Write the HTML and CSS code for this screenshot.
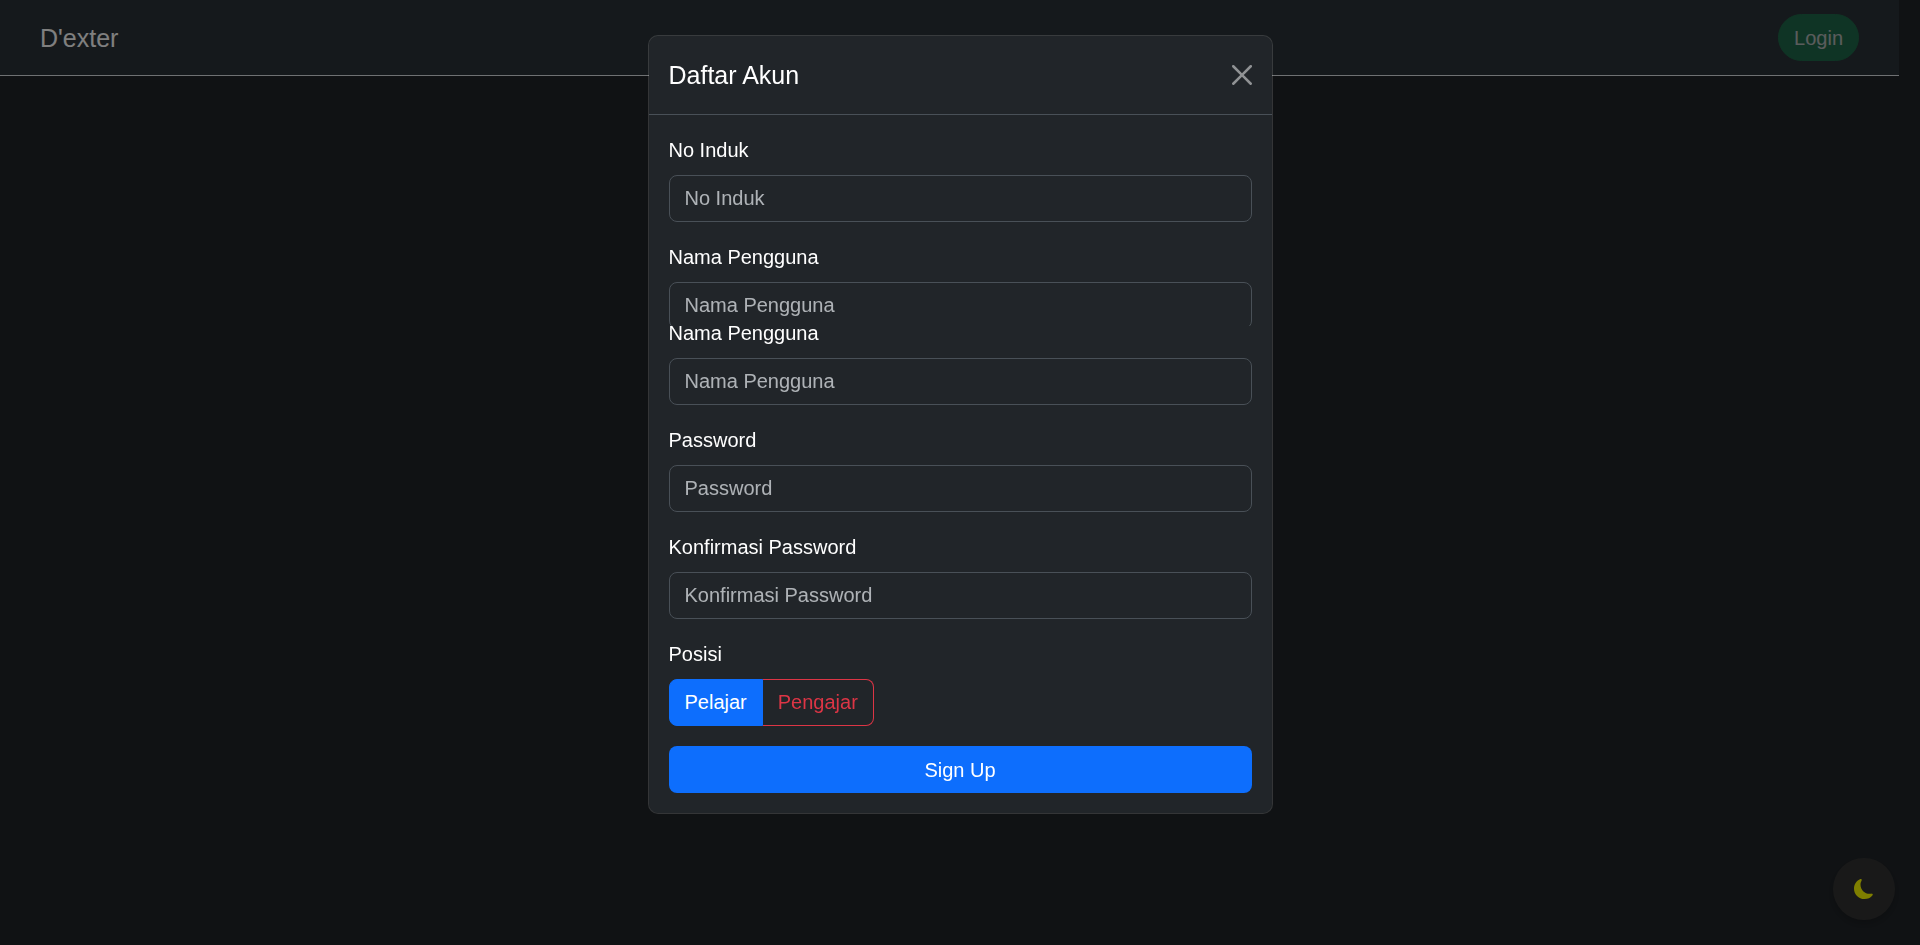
FILE: index.html
```
<!DOCTYPE html>
<html lang="id">
<head>
<meta charset="utf-8">
<meta name="viewport" content="width=device-width, initial-scale=1">
<title>D'exter</title>
<link rel="stylesheet" href="styles.css">
</head>
<body>
<div class="page">
  <nav class="navbar">
    <a class="brand" href="#">D'exter</a>
    <button class="login" type="button" disabled>Login</button>
  </nav>
</div>
<button class="theme-toggle" type="button" aria-label="Mode gelap">
  <svg class="moon" viewBox="0 0 16 16" aria-hidden="true"><path fill="currentColor" d="M6 .278a.768.768 0 0 1 .08.858 7.208 7.208 0 0 0-.878 3.46c0 4.021 3.278 7.277 7.318 7.277.527 0 1.04-.055 1.533-.16a.787.787 0 0 1 .81.316.733.733 0 0 1-.031.893A8.349 8.349 0 0 1 8.344 16C3.734 16 0 12.286 0 7.71 0 4.266 2.114 1.312 5.124.06A.752.752 0 0 1 6 .278z"/></svg>
</button>
<div class="backdrop">
  <div class="modal" role="dialog" aria-modal="true" aria-labelledby="modal-title">
    <header class="modal-header">
      <h1 class="modal-title" id="modal-title">Daftar Akun</h1>
      <button class="close" type="button" aria-label="Tutup">
        <svg class="close-icon" viewBox="0 0 16 16" aria-hidden="true"><path fill="currentColor" d="M.293.293a1 1 0 0 1 1.414 0L8 6.586 14.293.293a1 1 0 1 1 1.414 1.414L9.414 8l6.293 6.293a1 1 0 0 1-1.414 1.414L8 9.414l-6.293 6.293a1 1 0 0 1-1.414-1.414L6.586 8 .293 1.707a1 1 0 0 1 0-1.414z"/></svg>
      </button>
    </header>
    <form class="modal-body">
      <div class="field">
        <label class="label" for="induk">No Induk</label>
        <input class="control" id="induk" type="text" placeholder="No Induk">
      </div>
      <div class="field field-cut-end">
        <label class="label" for="nama-1">Nama Pengguna</label>
        <input class="control" id="nama-1" type="text" placeholder="Nama Pengguna">
      </div>
      <div class="field field-cut-start">
        <label class="label" for="nama-2">Nama Pengguna</label>
        <input class="control" id="nama-2" type="text" placeholder="Nama Pengguna">
      </div>
      <div class="field">
        <label class="label" for="password">Password</label>
        <input class="control" id="password" type="password" placeholder="Password">
      </div>
      <div class="field">
        <label class="label" for="konfirmasi">Konfirmasi Password</label>
        <input class="control" id="konfirmasi" type="password" placeholder="Konfirmasi Password">
      </div>
      <fieldset class="field choices">
        <legend class="label">Posisi</legend>
        <div class="group">
          <input class="check" type="radio" name="posisi" id="pelajar" checked>
          <label class="option option-primary" for="pelajar">Pelajar</label>
          <input class="check" type="radio" name="posisi" id="pengajar">
          <label class="option option-danger" for="pengajar">Pengajar</label>
        </div>
      </fieldset>
      <button class="submit" type="submit">Sign Up</button>
    </form>
  </div>
</div>
</body>
</html>
```

FILE: styles.css
```
*, *::before, *::after { box-sizing: border-box; }

body {
  margin: 0;
  background: #212529;
  color: #fff;
  font: 20px/30px "Liberation Sans", Arial, sans-serif;
}

button, input { font: inherit; }

/* room for the scrollbar while the dialog is open */
.page { padding-right: 21px; }

.navbar {
  display: flex;
  align-items: center;
  justify-content: space-between;
  padding: 14px 40px;
  background: #2b3338;
  border-bottom: 1px solid #dee2e6;
}

.brand {
  color: #fff;
  font-size: 25px;
  text-decoration: none;
}

.login {
  height: 47px;
  padding: 0 15px;
  border: 1px solid #198754;
  border-radius: 24px;
  background: #198754;
  color: #fff;
  opacity: .65;
}

.theme-toggle {
  position: fixed;
  right: 25px;
  bottom: 25px;
  display: flex;
  align-items: center;
  justify-content: center;
  width: 62px;
  height: 62px;
  padding: 0;
  border: 0;
  border-radius: 50%;
  background: #333;
  color: #ff0;
  box-shadow: 0 4px 8px rgba(0, 0, 0, .2);
}

.moon { width: 20px; height: 20px; }

.backdrop {
  position: fixed;
  inset: 0;
  overflow: auto;
  padding: 35px 20px;
  background: rgba(0, 0, 0, .5);
}

.modal {
  max-width: 625px;
  margin: 0 auto;
  border: 1px solid rgba(255, 255, 255, .15);
  border-radius: 10px;
  background: #212529;
  background-clip: padding-box;
}

.modal-header {
  display: flex;
  align-items: center;
  justify-content: space-between;
  padding: 20px;
  border-bottom: 1px solid #495057;
}

.modal-title {
  margin: 0;
  font-size: 25px;
  font-weight: 400;
  line-height: 38px;
}

.close {
  display: flex;
  padding: 0;
  border: 0;
  background: none;
  color: #fff;
  opacity: .5;
}

.close-icon { width: 20px; height: 20px; }

.modal-body { padding: 20px; }

.field { margin-bottom: 20px; }

.label {
  display: block;
  margin-bottom: 10px;
  padding: 0;
}

.control {
  display: block;
  width: 100%;
  height: 47px;
  padding: 0 15px;
  border: 1px solid #495057;
  border-radius: 8px;
  background: #212529;
  color: #fff;
}

.control::placeholder { color: rgba(222, 226, 230, .75); opacity: 1; }

/* the two name fields meet in a seam that hides the edge of each */
.field-cut-end {
  height: 84px;
  margin-bottom: 0;
  overflow: hidden;
}

.field-cut-start { overflow: hidden; }
.field-cut-start .label { margin-top: -8px; }

.choices {
  min-width: 0;
  margin: 0 0 20px;
  padding: 0;
  border: 0;
}

.group { display: flex; }

.check {
  position: absolute;
  opacity: 0;
  pointer-events: none;
}

.option {
  height: 47px;
  padding: 0 15px;
  border: 1px solid currentColor;
  line-height: 45px;
}

.option-primary { border-radius: 8px 0 0 8px; color: #0d6efd; }
.option-danger { margin-left: -1px; border-left-color: transparent; border-radius: 0 8px 8px 0; color: #dc3545; }

.check:checked + .option-primary {
  z-index: 1;
  border-color: #0d6efd;
  background: #0d6efd;
  color: #fff;
}

.submit {
  display: block;
  width: 100%;
  height: 47px;
  border: 0;
  border-radius: 8px;
  background: #0d6efd;
  color: #fff;
}
```
